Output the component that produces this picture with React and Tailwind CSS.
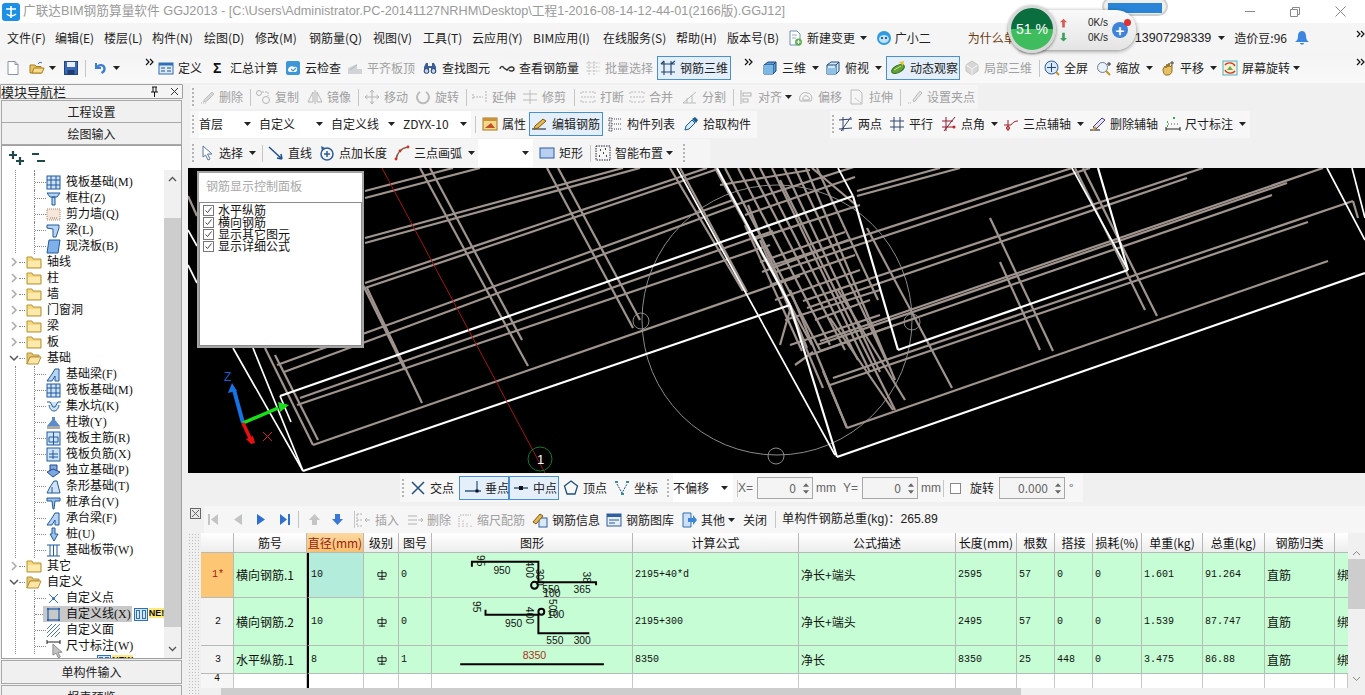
import React from "react";

const Ic = ({ c = "", children, o }) => (
  <svg viewBox="0 0 16 16" fill="none" className={`w-4 h-4 shrink-0 ${o ? "opacity-40" : ""} ${c}`}>{children}</svg>
);
const Caret = ({ c = "ml-[6px]" }) => (
  <svg viewBox="0 0 7 4" className={`w-[7px] h-[4px] shrink-0 ${c}`}><path d="M0 0H7L3.5 4Z" fill="#222" /></svg>
);
const More = ({ c = "" }) => (
  <svg viewBox="0 0 9 8" className={`w-[9px] h-[8px] shrink-0 ${c}`} fill="none" stroke="#111" strokeWidth="1.2"><path d="M1 1l3 3-3 3M5 1l3 3-3 3" /></svg>
);
const Grip = ({ c = "w-[9px] pl-[2px]" }) => (
  <div className={`shrink-0 flex flex-col justify-center gap-[2px] ${c}`}>
    {[0, 1, 2, 3, 4].map((i) => <span key={i} className="block w-[2px] h-[2px] bg-[#b5b5b5]" />)}
  </div>
);
const Sep = ({ c = "w-[6px]" }) => <div className={`shrink-0 h-full flex items-center ${c}`}><span className="block w-px h-[17px] bg-[#c6c6c6]" /></div>;

const Tool = ({ w, i, t, g, a, tight, box, pl = "" }) => (
  <div className={`flex items-center shrink-0 whitespace-nowrap ${w} ${g ? "text-[#a0a0a0]" : ""} ${box ? "h-[24px] bg-[#e4effb] border border-[#4a90d0] " + pl : "h-full"}`}>
    {i}
    <span className="ml-1">{t}</span>
    {a && <Caret c={tight ? "ml-[3px]" : "ml-[6px]"} />}
  </div>
);

const blue = "#2f6fb5";
const I = {
  doc: <Ic><path d="M3 1.5h7l3 3v10H3z" fill="#fff" stroke="#8a94a0" /><path d="M10 1.5v3h3" stroke="#8a94a0" /></Ic>,
  open: <Ic><path d="M1 5h5l1 1.5h5V13H1z" fill="#e9c45f" stroke="#a77f22" /><path d="M3 13l2-5h10l-2 5z" fill="#f6dc8c" stroke="#a77f22" /><path d="M9 4c1-2 3-2 4-1" stroke="#3b78b8" /></Ic>,
  save: <Ic><rect x="1.5" y="1.5" width="13" height="13" fill="#3a68b8" stroke="#24467f" /><rect x="4" y="2" width="8" height="5" fill="#e8eef8" /><rect x="4.5" y="10" width="7" height="4.5" fill="#1f3c6c" /></Ic>,
  undo: <Ic><path d="M4 3v5h5" stroke="#3e7fd0" strokeWidth="2" /><path d="M4.5 8c2-4 8-4 8 1 0 2-1 3-3 4" stroke="#3e7fd0" strokeWidth="2.4" /></Ic>,
  def: <Ic><rect x="1" y="3" width="14" height="11" fill="#dbe8f8" stroke={blue} /><rect x="1" y="3" width="14" height="2.5" fill={blue} /><path d="M3 8h4M3 11h4M9 8h4M9 11h4" stroke="#28507f" /></Ic>,
  sigma: <Ic><text x="3" y="13" fontSize="14" fontWeight="700" fill="#111" fontFamily="Liberation Sans">Σ</text></Ic>,
  cloud: <Ic><rect x="1" y="1" width="14" height="14" rx="2" fill="#3c96d8" /><path d="M3 10c0-3 4-5 6-3 2-1 4 1 3 3 0 2-2 2-3 2H5c-1 0-2-1-2-2z" fill="#fff" /><path d="M6 9l2 2 3-3" stroke="#3c96d8" strokeWidth="1.2" /></Ic>,
  level: <Ic o><path d="M1 14V8l9-4v10zM10 9h5v5h-5z" fill="#9aa0a6" /><path d="M3 10l7-5" stroke="#555" /></Ic>,
  binoc: <Ic><path d="M2 7l2-4h2v3h4V3h2l2 4v6H9V8H7v5H2z" fill="#3b5f9a" /><circle cx="4.5" cy="11" r="2.4" fill="#c5d6ee" stroke="#24406e" /><circle cx="11.5" cy="11" r="2.4" fill="#c5d6ee" stroke="#24406e" /></Ic>,
  view: <Ic><path d="M1 9c0-3 3-3 4-1l3 2 2-2c2-2 5-1 5 1s-3 3-5 1" stroke="#333" strokeWidth="1.5" /></Ic>,
  batch: <Ic o><path d="M1.5 3h13M1.5 7h13M1.5 11h13M4 1v14M9 1v14" stroke="#777" strokeDasharray="2 1" /></Ic>,
  rebar3d: <Ic><path d="M1 4h14M1 12h14M4 1v14M11 1v14M1 4l3-3M11 4l4-3" stroke="#20406e" strokeWidth="1.1" /></Ic>,
  cube: <Ic><path d="M2 5l4-3h8v9l-3 3H2z" fill="#5a9ad0" stroke="#1e4d80" /><path d="M2 5h9v9M11 5l3-3" stroke="#1e4d80" /><path d="M2 5h9v9H2z" fill="#7bb8e6" /></Ic>,
  cubeO: <Ic><path d="M2 5l4-3h8v9l-3 3H2z" fill="#d6e8f6" stroke="#1e4d80" /><path d="M2 5h9v9M11 5l3-3" stroke="#1e4d80" /><path d="M2 8h9v6H2z" fill="#8fc0e6" /></Ic>,
  orbit: <Ic><ellipse cx="8" cy="9" rx="7" ry="3.5" transform="rotate(-28 8 9)" fill="#5fa33a" stroke="#2f6a18" /><path d="M9 2l5-1-1 5z" fill="#e6c52e" /><path d="M4 10l7-4" stroke="#cfe76e" /></Ic>,
  local: <Ic o><path d="M8 1l6 4v6l-6 4-6-4V5z" fill="#aaa" stroke="#777" /><path d="M2 5l6 4 6-4M8 9v6" stroke="#eee" /></Ic>,
  full: <Ic><circle cx="7.5" cy="7.5" r="6.5" fill="#dbe8f8" stroke="#2c5c9c" /><path d="M7.5 3v9M3 7.5h9" stroke="#1f4c8c" /><path d="M12 12l3 3" stroke="#c0962a" strokeWidth="2" /></Ic>,
  zoom: <Ic><circle cx="6.5" cy="7.5" r="5" fill="#eaf2fb" stroke="#6e7f92" /><path d="M10 11l4 4" stroke="#c0962a" strokeWidth="2" /><path d="M13 2v4M11 4h4" stroke="#333" /></Ic>,
  hand: <Ic><path d="M3 9l2-3 1 2 1-4 1 3 1-4 1 4 2-2v6c0 2-2 4-4 4H6c-2 0-3-3-3-6z" fill="#e6c065" stroke="#8f6a1c" /><path d="M12 1v4M10 3h4" stroke="#444" /></Ic>,
  rot: <Ic><rect x="1" y="1" width="14" height="14" fill="#f8f0d4" stroke="#49b6c8" /><path d="M3 5c2-3 8-3 10 1" stroke="#d03a30" strokeWidth="1.4" /><path d="M13 11c-2 3-8 3-10-1" stroke="#d03a30" strokeWidth="1.4" /><path d="M5 10l3-4 3 4z" fill="#6eaa4a" /></Ic>,
  newc: <Ic><path d="M3 1h7l3 3v11H3z" fill="#fff" stroke="#6e8fb0" /><path d="M5 5h5M5 8h4" stroke="#9ab" /><circle cx="11.5" cy="12" r="3.5" fill="#5ab04c" /><path d="M11.5 10v4M9.5 12h4" stroke="#fff" /></Ic>,
  bot: <Ic><circle cx="8" cy="8" r="7" fill="#2f9ae0" /><ellipse cx="8" cy="9" rx="5" ry="4" fill="#bde4fa" /><circle cx="6" cy="8" r="1" fill="#136" /><circle cx="10" cy="8" r="1" fill="#136" /></Ic>,
  bell: <Ic><path d="M8 1c3 0 4 3 4 5 0 3 1 5 3 6H1c2-1 3-3 3-6 0-2 1-5 4-5z" fill="#3d86e0" /><path d="M6 13c0 2 4 2 4 0" fill="#3d86e0" /></Ic>,
  del: <Ic o><path d="M2 14h6" stroke="#555" strokeDasharray="1 1" /><path d="M6 10l7-7 2 2-7 7-4 1z" fill="#aaa" stroke="#777" /></Ic>,
  copy: <Ic o><circle cx="4" cy="4" r="2.5" stroke="#555" /><circle cx="11" cy="11" r="3.5" stroke="#555" /><path d="M7 3h6v4" stroke="#555" strokeDasharray="2 1" /></Ic>,
  mirror: <Ic o><path d="M8 1v14" stroke="#555" /><path d="M6 3v10H1zM10 3v10h5z" stroke="#555" /></Ic>,
  move: <Ic o><path d="M8 1v14M1 8h14M8 1L6 3.5M8 1l2 2.5M8 15l-2-2.5M8 15l2-2.5M1 8l2.5-2M1 8l2.5 2M15 8l-2.5-2M15 8l-2.5 2" stroke="#555" /></Ic>,
  rotate: <Ic o><path d="M5 3a6 6 0 1 0 6 0" stroke="#666" strokeWidth="2" /></Ic>,
  extend: <Ic o><path d="M1 8h10M14 2v12M1 5v6" stroke="#555" strokeDasharray="2 1" /></Ic>,
  trim: <Ic o><path d="M1 5h14M1 11h14M8 1v14" stroke="#666" /></Ic>,
  brk: <Ic o><path d="M1 5v-2h6M9 3h6v2M1 11v2h6M9 13h6v-2M1 8h14" stroke="#666" strokeDasharray="2 1" /></Ic>,
  split: <Ic o><path d="M1 14L14 3M1 14h13M5 14V9M10 14V6" stroke="#666" /></Ic>,
  align: <Ic o><path d="M3 1v14" stroke="#555" /><rect x="5" y="4" width="8" height="3" stroke="#555" /><rect x="5" y="10" width="5" height="3" stroke="#555" /></Ic>,
  offset: <Ic o><path d="M2 12c-2-6 4-10 7-8 4 0 6 4 4 8z" stroke="#555" /><path d="M5 11c-1-3 2-5 4-4s3 2 2 4z" stroke="#555" /></Ic>,
  stretch: <Ic o><path d="M2 1h8l3 3v11H2z" stroke="#666" /><path d="M6 9l6 5" stroke="#666" strokeDasharray="2 1" /></Ic>,
  grab: <Ic o><path d="M1 14h4" stroke="#555" strokeDasharray="1 1" /><path d="M6 11l7-9 2 2-8 9z" stroke="#666" fill="#ccc" /></Ic>,
  prop: <Ic><rect x="1" y="2" width="14" height="12" fill="#f3d98a" stroke="#a8781f" /><rect x="1" y="2" width="14" height="3" fill="#c9923a" /><path d="M3 12l6-5 4 5z" fill="#c74e2c" /></Ic>,
  edit: <Ic><path d="M0 13h14" stroke="#111" /><path d="M3 10l8-7 3 2-8 7-4 1z" fill="#e8b84c" stroke="#7a5a12" /></Ic>,
  list: <Ic><path d="M2 2h3v3H2zM2 7h3v3H2zM2 12h3v3H2z" stroke="#445" strokeDasharray="1 .5" /><path d="M7 3h7M7 8h7M7 13h7" stroke="#445" strokeDasharray="1 1" /></Ic>,
  pick: <Ic><path d="M2 14l1-4 6-6 3 3-6 6z" fill="#d5ecf8" stroke="#1a5a96" /><path d="M9 3l3-2 3 3-2 3z" fill="#1a5a96" /></Ic>,
  two: <Ic><path d="M1 4l13-1M1 13l13-1M5 1v14M13 1L3 15" stroke="#34466a" /></Ic>,
  para: <Ic><path d="M1 5h14M1 11h14M5 1v14M11 1v14" stroke="#34466a" /></Ic>,
  angle: <Ic><path d="M1 5h11M1 11h11M5 1v14M3 15L14 1" stroke="#8c1c30" /><circle cx="13" cy="11" r="1.5" fill="#d02020" /></Ic>,
  three: <Ic><path d="M5 15V4M1 9h7c2-3 4-4 7-4" stroke="#9c1c28" /><circle cx="5" cy="12" r="1.6" stroke="#c02020" /></Ic>,
  delaux: <Ic><path d="M0 14h10" stroke="#111" /><path d="M3 11l9-9 3 2-9 9z" fill="#e8e4f2" stroke="#433a7c" /><path d="M3 14l3-3" stroke="#c9a04a" strokeWidth="2" /></Ic>,
  dim: <Ic><path d="M1 11v4M15 11v4M1 13h14" stroke="#222" /><path d="M2 6h1M8 2h2M2 10h1" stroke="#3aa84a" strokeWidth="2" /><path d="M3 8h10" stroke="#555" strokeDasharray="1 2" /></Ic>,
  sel: <Ic><path d="M4 1l9 8H8.500l2.500 5-2 1-2.500-5L4 12z" fill="#fff" stroke="#5878a0" /></Ic>,
  lineT: <Ic><path d="M1 2l13 12M14 14l-1-5M14 14l-5-1" stroke="#1f4f8f" strokeWidth="1.5" /></Ic>,
  addL: <Ic><circle cx="8" cy="9" r="6" stroke="#2e5c9a" strokeWidth="1.5" /><path d="M8 6v6M5 9h6" stroke="#2e5c9a" strokeWidth="1.5" /><path d="M2 1l4 2-3 3z" fill="#2e5c9a" /></Ic>,
  arc: <Ic><path d="M2 15C3 8 7 3 14 2" stroke="#7d5a48" strokeWidth="1.5" /><circle cx="2" cy="14" r="1.4" fill="#d03020" /><circle cx="6" cy="6" r="1.4" fill="#d03020" /><circle cx="14" cy="2" r="1.4" fill="#d03020" /></Ic>,
  rect: <Ic><rect x="1" y="3" width="14" height="10" fill="#b8cff0" stroke="#2f5da0" /></Ic>,
  smart: <Ic><rect x="1" y="1" width="14" height="14" stroke="#223" strokeDasharray="1.5 1" /><path d="M5 5h1M10 4h1M8 8h1M4 11h1M11 11h1" stroke="#111" strokeWidth="1.6" /></Ic>,
  cross: <Ic><path d="M2 2l12 12M14 2L2 14" stroke="#23507f" strokeWidth="1.5" /></Ic>,
  perp: <Ic><path d="M0 11h16" stroke="#23507f" strokeWidth="1.4" /><path d="M12 1v10" stroke="#23507f" strokeWidth="1.2" /><rect x="10.5" y="9.5" width="3" height="3" fill="#111" /></Ic>,
  mid: <Ic><path d="M1 8h14" stroke="#23507f" strokeWidth="1.4" /><rect x="6" y="6" width="4" height="4" fill="#111" /></Ic>,
  top: <Ic><path d="M8 1l6.5 5-2.5 8H4L1.500 6z" stroke="#23507f" strokeWidth="1.3" /></Ic>,
  coord: <Ic><path d="M3 4l5 9 5-9" stroke="#23507f" strokeDasharray="2 1" /><path d="M1 2h3M12 2h3M7 14h3" stroke="#3a8c9c" strokeWidth="2" /></Ic>,
  ins: <Ic o><path d="M2 2h6M2 8h6M2 14h6M2 2v12" stroke="#555" strokeDasharray="2 1" /><path d="M15 8h-5M12 6l-2 2 2 2" stroke="#555" /></Ic>,
  dela: <Ic o><path d="M1 4h9M1 8h9M1 12h9" stroke="#555" /><path d="M11 8h5M14 6l2 2-2 2" stroke="#555" /></Ic>,
  scale: <Ic o><path d="M2 15V4M6 15V8M10 15v-4M14 15v-2M3 3h11" stroke="#555" strokeDasharray="1.500 1" /></Ic>,
  info: <Ic><rect x="7" y="6" width="8" height="9" fill="#dbe8f8" stroke="#2f5da0" /><path d="M1 10l7-8 3 2-7 8z" fill="#e6b950" stroke="#7a5a12" /></Ic>,
  lib: <Ic><rect x="1" y="2" width="14" height="12" fill="#e6eefa" stroke="#2f5da0" /><rect x="1" y="2" width="14" height="3" fill="#2f5da0" /><path d="M3 8h10M3 11h6" stroke="#2f5da0" /></Ic>,
  oth: <Ic><path d="M2 1h8v14H2z" fill="#cfe0f6" stroke="#2f6fb5" /><path d="M7 6h5V3l4 5-4 5v-3H7z" fill="#3b86d8" /></Ic>,
};

const Menu = [
  ["文件(F)", "w-[48px]"], ["编辑(E)", "w-[49px]"], ["楼层(L)", "w-[48px]"], ["构件(N)", "w-[52px]"], ["绘图(D)", "w-[51px]"],
  ["修改(M)", "w-[54px]"], ["钢筋量(Q)", "w-[64px]"], ["视图(V)", "w-[50px]"], ["工具(T)", "w-[49px]"], ["云应用(Y)", "w-[61px]"],
  ["BIM应用(I)", "w-[70px]"], ["在线服务(S)", "w-[73px]"], ["帮助(H)", "w-[51px]"], ["版本号(B)", "w-[53px]"],
];

const lines = {
  grey: [
    [313, 445, 800, 276], [300, 398, 773, 231], [297, 405, 770, 245], [277, 365, 733, 200], [284, 372, 737, 205],
    [365, 283, 707, 168], [365, 288, 715, 170], [365, 238, 623, 168], [365, 243, 640, 168], [365, 191, 453, 168], [365, 198, 480, 168],
    [188, 196, 197, 216], [420, 168, 528, 366], [430, 168, 522, 340], [367, 288, 422, 403], [363, 285, 405, 370],
    [547, 168, 633, 328], [558, 168, 640, 320], [670, 168, 743, 291], [680, 168, 747, 292],
    [313, 445, 265, 348], [318, 440, 275, 355],
    [847, 428, 1328, 261], [847, 428, 823, 371], [830, 385, 1308, 222], [833, 378, 1353, 201], [1353, 201, 1358, 218],
    [817, 345, 1287, 183], [820, 351, 1272, 195], [820, 341, 1323, 168], [803, 301, 1203, 168], [807, 308, 1187, 178],
    [773, 265, 1072, 168], [776, 272, 1090, 168], [857, 191, 940, 168], [857, 196, 960, 168],
    [830, 318, 893, 410], [952, 388, 867, 228], [1053, 351, 990, 218], [1157, 316, 1083, 168], [1040, 350, 1000, 262], [1145, 310, 1075, 168],
    [895, 410, 780, 180], [905, 400, 838, 290], [856, 205, 812, 168],
    [802, 351, 745, 225], [807, 348, 748, 205], [823, 388, 760, 240], [847, 428, 790, 290], [715, 168, 812, 345], [725, 168, 820, 350], [738, 168, 830, 345],
    [750, 168, 845, 350], [760, 168, 858, 360], [772, 168, 870, 372], [784, 168, 880, 372], [795, 168, 886, 360], [806, 168, 895, 380], [817, 168, 878, 300],
    [720, 185, 810, 170], [735, 205, 860, 165], [745, 215, 855, 177], [752, 240, 860, 205], [760, 262, 845, 232], [770, 285, 855, 255], [775, 300, 860, 270], [785, 320, 880, 290], [790, 345, 880, 315], [810, 355, 895, 325], [815, 320, 870, 300], [762, 272, 848, 240],
    [780, 345, 790, 310], [795, 365, 813, 352],
  ],
  whiteThick: [[303, 471, 790, 305], [790, 305, 837, 457], [837, 457, 1365, 273], [280, 396, 853, 196], [853, 196, 898, 350], [898, 350, 1128, 270], [1128, 270, 1098, 168], [717, 168, 790, 305]],
  whiteThin: [[677, 168, 835, 455], [838, 168, 853, 196], [1072, 168, 1128, 270], [1327, 168, 1365, 240], [1352, 168, 1365, 218], [233, 348, 303, 471], [253, 348, 303, 471], [188, 230, 197, 246], [188, 265, 197, 283], [280, 396, 291, 422]],
};

function Scene() {
  return (
    <svg viewBox="188 168 1177 305" className="w-[1177px] h-[305px] block bg-black" fill="none">
      <circle cx="777" cy="320" r="135" stroke="#8a8a8a" />
      <circle cx="641" cy="321" r="8" stroke="#8a8a8a" /><circle cx="776" cy="456" r="8" stroke="#8a8a8a" /><circle cx="912" cy="322" r="8" stroke="#8a8a8a" />
      {lines.grey.map((l, i) => <line key={i} x1={l[0]} y1={l[1]} x2={l[2]} y2={l[3]} stroke="#a0948f" strokeWidth="2.2" />)}
      {lines.whiteThin.map((l, i) => <line key={i} x1={l[0]} y1={l[1]} x2={l[2]} y2={l[3]} stroke="#fff" strokeWidth="1.7" />)}
      {lines.whiteThick.map((l, i) => <line key={i} x1={l[0]} y1={l[1]} x2={l[2]} y2={l[3]} stroke="#fff" strokeWidth="2.2" />)}
      <line x1="382" y1="168" x2="545" y2="473" stroke="#a81414" strokeWidth="1" />
      <circle cx="540" cy="459" r="12" stroke="#0e7a2c" />
      <text x="537" y="464" fontSize="13" fill="#fff" fontFamily="Liberation Sans">1</text>
      <path d="M243 423L234 390" stroke="#1673e6" strokeWidth="4" /><path d="M232 383l-4 10 9-2z" fill="#1673e6" />
      <path d="M243 423L278 408" stroke="#18e018" strokeWidth="3.500" /><path d="M289 405l-11-3 2 10z" fill="#18e018" />
      <path d="M243 423L250 438" stroke="#e81010" strokeWidth="3.500" /><path d="M251 444l-5-5 7-3 2 7z" fill="#e81010" />
      <text x="224" y="381" fontSize="12" fill="#1a5fd0" fontFamily="Liberation Sans">Z</text>
      <path d="M263 432l9 9M272 432l-9 9" stroke="#d02020" />
    </svg>
  );
}

const Row = ({ t, arrow }) => (
  <div className="flex items-center h-[16px] whitespace-nowrap">
    <span className="w-[10px] ml-[7px] flex justify-center shrink-0">
      <svg viewBox="0 0 10 10" className="w-[10px] h-[10px]" fill="none" stroke={arrow === "open" ? "#555" : "#aaa"} strokeWidth="1.5">
        {arrow === "open" ? <path d="M1 3l4 4 4-4" /> : <path d="M3 1l4 4-4 4" />}
      </svg>
    </span>
    <span className="w-[6px] border-t border-dotted border-[#888] shrink-0" />
    <svg viewBox="0 0 16 14" className="w-[16px] h-[14px] shrink-0 ml-px">
      {arrow === "open"
        ? <><path d="M1 2h5l1 2h6v2H4l-3 7z" fill="#e8c770" stroke="#b8923c" /><path d="M4 6h11l-3 7H1z" fill="#fbe6a6" stroke="#b8923c" /></>
        : <><path d="M1 2h5l1 2h8v9H1z" fill="#f6d87a" stroke="#b8923c" /><path d="M2 6h12v6H2z" fill="#fbe9ae" /></>}
    </svg>
    <span className="ml-[5px]">{t}</span>
  </div>
);

const leaf = {
  raft: <><rect x="1" y="1" width="13" height="13" fill="#cfe2f8" stroke="#1f5a9c" /><path d="M1 5h13M1 10h13M5 1v13M10 1v13" stroke="#1f5a9c" /></>,
  col: <><path d="M1 2h13l-3 4H4zM6 6h3v8H6z" fill="#b8d4f2" stroke="#1f5a9c" /></>,
  wall: <><rect x="1" y="2" width="13" height="11" fill="#f6e7da" stroke="#b08060" strokeDasharray="1 1" /><path d="M4 11h7" stroke="#777" strokeDasharray="1 1" /></>,
  beam: <><path d="M1 2h12v3l-3 9H7V6L1 5z" fill="#b8d4f2" stroke="#1f5a9c" /></>,
  slab: <><path d="M3 1h11l-2 13H1z" fill="#7fb0ea" stroke="#1f5a9c" /></>,
  fbeam: <><path d="M1 14l5-7 3-5h4v12H9V9l-3 5z" fill="#b8d4f2" stroke="#1f5a9c" /></>,
  pit: <><path d="M1 3h3l3 5h2l3-5h3M3 6c1 8 9 8 10 0" stroke="#1f5a9c" fill="#cfe2f8" /></>,
  cap: <><path d="M6 2h3v3l5 6H1l5-6z" fill="#5a8ccc" /><rect x="1" y="11" width="13" height="3" fill="#aaa" /></>,
  main: <><rect x="1" y="1" width="13" height="13" fill="#cfe2f8" stroke="#1f5a9c" /><path d="M3 6h9v5H3zM7.500 1v13" stroke="#1f5a9c" fill="none" /></>,
  neg: <><rect x="1" y="1" width="13" height="13" fill="#cfe2f8" stroke="#1f5a9c" /><path d="M3 7h9M3 10h9M7 3v9" stroke="#1f5a9c" /></>,
  ind: <><path d="M1 9l6-3 7 3-7 5zM4 8V2h7v6" fill="#7fa8e0" stroke="#1f4a8c" /></>,
  strip: <><path d="M1 14l3-6 4-6h3l3 12zM6 14V8" fill="#cfe2f8" stroke="#1f5a9c" /></>,
  pcap: <><path d="M1 3h13v3H9l-1 8H7L6 6H1z" fill="#9cc0ea" stroke="#1f5a9c" /></>,
  pile: <><path d="M6 1h3v6h3l-4 7-4-7h2z" fill="#9cc0ea" stroke="#1f5a9c" /></>,
  band: <><path d="M1 2h13M1 13h13M4 2v11M7.500 2v11M11 2v11" stroke="#1f5a9c" /></>,
  pt: <><path d="M3 3l9 9M12 3l-9 9" stroke="#3a72b8" /><circle cx="7.500" cy="7.500" r="1.500" fill="#3a72b8" /></>,
  line: <><rect x="2" y="2" width="11" height="11" stroke="#2a66ac" strokeWidth="1.300" fill="none" /><path d="M1 1h2v2H1zM12 1h2v2h-2zM1 12h2v2H1zM12 12h2v2h-2z" fill="#2a66ac" /></>,
  face: <><path d="M1 6l5-5M1 10l9-9M1 14L14 1M5 14l9-9M9 14l5-5" stroke="#4a78b0" /></>,
  dim: <><path d="M1 1v4M14 1v4M1 3h13" stroke="#222" /></>,
};
const BoxIcon = () => (
  <span className="ml-[2px] w-[14px] h-[13px] border border-[#2f6fb5] bg-[#d5e6f8] shrink-0 flex justify-center gap-[2px] pt-[1px]">
    <span className="w-[4px] h-[9px] border border-[#2f6fb5]" /><span className="w-[4px] h-[9px] border border-[#2f6fb5]" />
  </span>
);
const Leaf = ({ k, t, hl, children }) => (
  <div className="flex items-center h-[16px] whitespace-nowrap ml-[32px] border-l border-dotted border-[#888]">
    <span className={`border-t border-dotted border-[#888] shrink-0 ${hl ? "w-[8px]" : "w-[11px]"}`} />
    <span className={`flex items-center h-full shrink-0 ${hl ? "bg-[#c8c8c8] pl-[3px] pr-[1px]" : ""}`}>
      <svg viewBox="0 0 15 15" className="w-[15px] h-[15px] shrink-0" fill="none">{leaf[k]}</svg>
      <span className="ml-[5px]">{t}</span>
    </span>
    {children}
  </div>
);

const Spin = ({ v, w }) => (
  <div className={`flex items-center justify-end h-[22px] border border-[#a8a8a8] bg-[#f4f4f4] text-[#666] shrink-0 ${w}`}>
    <span>{v}</span>
    <span className="w-[13px] ml-[3px] flex flex-col items-center gap-[3px]">
      <svg viewBox="0 0 7 4" className="w-[6px] h-[4px]"><path d="M0 4h7L3.500 0z" fill="#666" /></svg>
      <svg viewBox="0 0 7 4" className="w-[6px] h-[4px]"><path d="M0 0h7L3.500 4z" fill="#666" /></svg>
    </span>
  </div>
);

const cols = "grid grid-cols-[33px_73px_57px_35px_33px_201px_166px_157px_61px_38px_38px_49px_61px_62px_70px_13px]";
const head = ["", "筋号", "直径(mm)", "级别", "图号", "图形", "计算公式", "公式描述", "长度(mm)", "根数", "搭接", "损耗(%)", "单重(kg)", "总重(kg)", "钢筋归类"];
const Num = ({ children }) => <span className="font-['Liberation_Mono',monospace] text-[10px]">{children}</span>;
const cell = "border-r border-b border-[#b4bcb6] flex items-center pl-[2px] overflow-hidden whitespace-nowrap";
const T2 = (p) => <text fontFamily="Liberation Sans" fontSize="10.500" fill="#111" {...p} />;

const Shape1 = () => (
  <svg viewBox="0 0 201 45" className="w-full h-full" fill="none">
    <path d="M38 14V9H106V30H165V33" stroke="#000" strokeWidth="2" /><circle cx="102" cy="33" r="3.500" stroke="#000" strokeWidth="2" />
    <T2 x="60" y="21">950</T2><T2 x="110" y="41">550</T2><T2 x="142" y="41">365</T2><T2 x="111" y="44.500">100</T2>
    <T2 transform="translate(43,2) rotate(90)">95</T2><T2 transform="translate(93,8) rotate(90)">400</T2><T2 transform="translate(104,16) rotate(90)">300</T2><T2 transform="translate(152,19) rotate(90)">38</T2>
  </svg>
);
const Shape2 = () => (
  <svg viewBox="0 0 201 48" className="w-full h-full" fill="none">
    <path d="M52 12V17H106V36H158" stroke="#000" strokeWidth="2" /><circle cx="109" cy="14" r="3" stroke="#000" strokeWidth="2" />
    <T2 x="72" y="30">950</T2><T2 x="115" y="20">100</T2><T2 x="114" y="47">550</T2><T2 x="142" y="47">300</T2>
    <T2 transform="translate(39,3) rotate(90)">95</T2><T2 transform="translate(93,9) rotate(90)">400</T2><T2 transform="translate(117,1) rotate(90)">500</T2>
  </svg>
);
const Shape3 = () => (
  <svg viewBox="0 0 201 28" className="w-full h-full" fill="none">
    <path d="M25 19H174" stroke="#000" strokeWidth="2" />
    <text x="102" y="13" textAnchor="middle" fontSize="11" fill="#b03020" fontFamily="Liberation Sans">8350</text>
  </svg>
);

const rows = [
  { h: "h-[45px]", n: "1*", name: "横向钢筋.1", d: "10", lv: "0", S: Shape1, f: "2195+40*d", desc: "净长+端头", len: "2595", c: "57", l: "0", s: "0", u: "1.601", tot: "91.264" },
  { h: "h-[48px]", n: "2", name: "横向钢筋.2", d: "10", lv: "0", S: Shape2, f: "2195+300", desc: "净长+端头", len: "2495", c: "57", l: "0", s: "0", u: "1.539", tot: "87.747" },
  { h: "h-[28px]", n: "3", name: "水平纵筋.1", d: "8", lv: "1", S: Shape3, f: "8350", desc: "净长", len: "8350", c: "25", l: "448", s: "0", u: "3.475", tot: "86.88" },
];

function Table() {
  return (
    <div className="flex-1 relative overflow-hidden bg-white text-[12px] text-[#111]">
      <div className={`${cols} h-[20px] bg-gradient-to-b from-white to-[#ececec]`}>
        {head.map((h, i) => (
          <div key={i} className={`border-r border-b border-[#b8b8b8] flex items-center justify-center whitespace-nowrap ${i === 2 ? "bg-gradient-to-b from-[#fbd9a0] to-[#f6c070] text-[#9c1c10]" : ""}`}>{h}</div>
        ))}
        <div className="border-b border-[#b8b8b8]" />
      </div>
      {rows.map((r, i) => (
        <div key={i} className={`${cols} ${r.h} bg-[#c6fdd4]`}>
          <div className={`${cell} justify-center ${i === 0 ? "bg-[#fcc674] text-[#9c1c10]" : "bg-[#f3f3f3]"}`}><Num>{r.n}</Num></div>
          <div className={cell}>{r.name}</div>
          <div className={`${cell} border-l-2 border-l-black ${i === 0 ? "bg-[#b4ecdc]" : ""}`}><Num>{r.d}</Num></div>
          <div className={`${cell} justify-center pl-0`}><svg viewBox="0 0 11 11" className="w-[10px] h-[10px]" fill="none" stroke="#111"><path d="M1 3h9v4H1zM5.500 0v11M2 10h7" /></svg></div>
          <div className={cell}><Num>{r.lv}</Num></div>
          <div className={`${cell} pl-0`}><r.S /></div>
          <div className={cell}><Num>{r.f}</Num></div>
          <div className={cell}>{r.desc}</div>
          <div className={cell}><Num>{r.len}</Num></div>
          <div className={cell}><Num>{r.c}</Num></div>
          <div className={cell}><Num>{r.l}</Num></div>
          <div className={cell}><Num>{r.s}</Num></div>
          <div className={cell}><Num>{r.u}</Num></div>
          <div className={cell}><Num>{r.tot}</Num></div>
          <div className={cell}>直筋</div>
          <div className="overflow-hidden pl-[2px] flex items-center border-b border-[#b4bcb6]">绑</div>
        </div>
      ))}
      <div className={`${cols} h-[14px]`}>
        <div className="border-r border-[#c8c8c8] bg-[#f6f6f6] flex justify-center"><Num>4</Num></div>
        <div className="border-r border-[#c8c8c8]" />
        <div className="border-r border-[#c8c8c8] border-l-2 border-l-black" />
        {[0, 1, 2, 3, 4, 5, 6, 7, 8, 9, 10, 11, 12].map((i) => <div key={i} className="border-r border-[#c8c8c8]" />)}
      </div>
      <div className="absolute left-0 right-0 bottom-0 h-[7px] bg-[#f0f0f0] flex">
        <div className="w-[20px]" /><div className="w-[800px] bg-[#cdcdcd]" />
      </div>
      <div className="absolute right-0 top-0 bottom-0 w-[17px] bg-[#f0f0f0] flex flex-col items-center">
        <svg viewBox="0 0 9 6" className="w-[9px] h-[6px] mt-[17px]" fill="none" stroke="#888"><path d="M1 5l3.500-3.500L8 5" /></svg>
        <div className="w-full h-[50px] mt-[3px] bg-[#cdcdcd]" />
        <div className="flex-1" />
        <svg viewBox="0 0 9 6" className="w-[9px] h-[6px] mb-[13px]" fill="none" stroke="#888"><path d="M1 1l3.500 3.500L8 1" /></svg>
      </div>
    </div>
  );
}

function Widget() {
  return (
    <>
      <div className="absolute left-[1102px] -top-[3px] w-[66px] h-[19px] rounded-full bg-[#eee] border-2 border-[#d0d0d0] flex items-center justify-center">
        <div className="w-[54px] h-[10px] mt-[3px] bg-[#2a85d8]" />
      </div>
      <div className="absolute left-[1020px] top-[10px] w-[116px] h-[40px] rounded-r-[20px] bg-gradient-to-b from-[#fafafa] to-[#e4e4e4] shadow-[0_1px_4px_rgba(0,0,0,0.45)] flex items-center text-[10px] text-[#222]">
        <div className="w-[38px]" />
        <div className="flex flex-col items-center w-[10px] gap-[4px]">
          <svg viewBox="0 0 8 10" className="w-[7px] h-[10px]"><path d="M4 0l4 4H5.500v6h-3V4H0z" fill="#d85a50" /></svg>
          <svg viewBox="0 0 8 10" className="w-[7px] h-[10px]"><path d="M4 10l4-4H5.500V0h-3v6H0z" fill="#3aa060" /></svg>
        </div>
        <div className="ml-[20px] flex flex-col gap-[3px] leading-[12px] font-['Liberation_Sans',sans-serif]"><span>0K/s</span><span>0K/s</span></div>
        <div className="relative ml-[4px] w-[16px] h-[16px] rounded-full bg-[#3f83d8] flex items-center justify-center text-white text-[15px] font-bold leading-none">+
          <span className="absolute -top-[3px] -right-[3px] w-[7px] h-[7px] rounded-full bg-[#e03030]" />
        </div>
      </div>
      <div className="absolute left-[1008px] top-[5px] w-[48px] h-[48px] rounded-full border-[3px] border-[#d8d8d8] overflow-hidden shadow-[0_1px_3px_rgba(0,0,0,0.5)] bg-gradient-to-b from-[#0b6e3e] from-50% to-[#3fbd5e] to-50% flex items-center justify-center text-white text-[14px] font-['Liberation_Sans',sans-serif]">51 %</div>
    </>
  );
}

export default function App() {
  return (
    <div className="relative w-[1365px] h-[695px] overflow-hidden bg-[#f0f0f0] text-[12px] text-[#222] leading-none font-['Noto_Sans_CJK_SC','Noto_Sans',sans-serif]">
      {/* Title */}
      <div className="h-[23px] bg-white flex items-center text-[#9a9a9a] whitespace-nowrap">
        <svg viewBox="0 0 18 18" className="w-[18px] h-[18px] ml-[2px] mt-[1px] shrink-0">
          <rect width="18" height="18" rx="3" fill="#1c8fe6" />
          <path d="M4 6h10M9 3v12M5 11c1 2 6 3 9 0" stroke="#fff" strokeWidth="1.600" fill="none" />
        </svg>
        <span className="ml-[3px] font-['Liberation_Sans','Noto_Sans_CJK_SC',sans-serif] text-[12.7px]">广联达BIM钢筋算量软件 GGJ2013 - [C:\Users\Administrator.PC-20141127NRHM\Desktop\工程1-2016-08-14-12-44-01(2166版).GGJ12]</span>
        <div className="ml-auto flex items-center">
          <span className="block w-[10px] h-px bg-[#888] mr-[35px]" />
          <svg viewBox="0 0 10 10" className="w-[10px] h-[10px] mr-[35px]" fill="none" stroke="#888"><path d="M.5 2.500h7v7h-7zM2.500 2.500v-2h7v7h-2" /></svg>
          <svg viewBox="0 0 11 11" className="w-[11px] h-[11px] mr-[19px]" fill="none" stroke="#888"><path d="M.5.500l10 10M10.500.500l-10 10" /></svg>
        </div>
      </div>
      {/* Menu */}
      <div className="h-[30px] bg-[#f5f5f5] flex items-center pl-[7px] whitespace-nowrap">
        {Menu.map(([t, w]) => <div key={t} className={`shrink-0 ${w}`}>{t}</div>)}
        <div className="w-[7px] shrink-0" />
        {I.newc}
        <span className="ml-[4px]">新建变更</span><Caret c="ml-[5px]" />
        <span className="w-[14px]" />
        {I.bot}
        <span className="ml-[3px]">广小二</span>
        <span className="ml-[37px] text-[#6b3a10]">为什么单</span>
        <span className="ml-[119px] text-[12.5px] font-['Liberation_Sans',sans-serif]">13907298339</span>
        <Caret c="ml-[7px]" />
        <span className="ml-[9px]">造价豆:96</span>
        <span className="ml-[7px]">{I.bell}</span>
        <More c="ml-[46px] -mt-[8px]" />
      </div>
      {/* Toolbar 1 */}
      <div className="h-[30px] bg-gradient-to-b from-[#f4f4f4] to-[#f9f9f9] flex items-center pl-[5px] whitespace-nowrap">
        <Tool w="w-[24px]" i={I.doc} />
        <div className="flex items-center w-[34px] shrink-0">{I.open}<Caret c="ml-[4px]" /></div>
        <Tool w="w-[22px]" i={I.save} />
        <Sep c="w-[7px]" />
        <div className="flex items-center w-[53px] shrink-0">{I.undo}<Caret c="ml-[5px]" /></div>
        <div className="w-[13px] shrink-0 -mt-[12px]"><More /></div>
        <Tool w="w-[52px]" i={I.def} t="定义" />
        <Tool w="w-[75px]" i={I.sigma} t="汇总计算" />
        <Tool w="w-[62px]" i={I.cloud} t="云检查" />
        <Tool w="w-[75px]" i={I.level} t="平齐板顶" g />
        <Tool w="w-[77px]" i={I.binoc} t="查找图元" />
        <Tool w="w-[86px]" i={I.view} t="查看钢筋量" />
        <Tool w="w-[72px]" i={I.batch} t="批量选择" g />
        <Tool w="w-[74px]" i={I.rebar3d} t="钢筋三维" box pl="pl-[2px]" />
        <div className="w-[31px] pl-[13px] shrink-0 -mt-[12px]"><More /></div>
        <Tool w="w-[63px]" i={I.cube} t="三维" a />
        <Tool w="w-[61px]" i={I.cubeO} t="俯视" a />
        <Tool w="w-[74px]" i={I.orbit} t="动态观察" box pl="pl-[3px]" />
        <div className="w-[4px] shrink-0" />
        <Tool w="w-[75px]" i={I.local} t="局部三维" g />
        <Sep c="w-[5px]" />
        <Tool w="w-[52px]" i={I.full} t="全屏" />
        <Tool w="w-[64px]" i={I.zoom} t="缩放" a />
        <Tool w="w-[62px]" i={I.hand} t="平移" a />
        <Tool w="w-[84px]" i={I.rot} t="屏幕旋转" a tight />
        <More c="ml-[50px] -mt-[12px]" />
      </div>
      {/* Body */}
      <div className="h-[612px] pt-px flex">
        {/* Left */}
        <div className="w-[183px] shrink-0 h-full flex flex-col">
          <div className="h-[15px] border border-[#a0a0a0] rounded-[1px] flex items-center bg-[#f4f4f4] text-[13px] shrink-0">
            <span>模块导航栏</span>
            <svg viewBox="0 0 9 11" className="w-[9px] h-[11px] ml-auto" fill="none" stroke="#111"><path d="M2 1h5M3 1v5M6 1v5M1 6h7M4.500 6v5" /></svg>
            <svg viewBox="0 0 9 9" className="w-[9px] h-[9px] ml-[11px] mr-[3px]" fill="none" stroke="#333"><path d="M1 1l7 7M8 1L1 8" /></svg>
          </div>
          <div className="h-[23px] mt-px mx-px border border-[#a8a8a8] bg-[#f0f0f0] flex items-center justify-center shrink-0">工程设置</div>
          <div className="h-[22px] mx-px border-x border-b border-[#a8a8a8] bg-[#f0f0f0] flex items-center justify-center shrink-0">绘图输入</div>
          <div className="h-[514px] mx-px border border-[#a0a0a0] bg-white flex flex-col overflow-hidden shrink-0">
            <div className="h-[24px] flex items-center pl-[5px] shrink-0">
              <svg viewBox="0 0 40 16" className="w-[40px] h-[16px]" fill="none" stroke="#1f4a4a" strokeWidth="2.200"><path d="M2 5h8M6 1v8M9 11h8M13 7v8M25 4h7M30 11h8" /></svg>
            </div>
            <div className="flex-1 relative flex overflow-hidden text-[#111] font-['Liberation_Serif','Noto_Sans_CJK_SC',serif]">
              <div className="flex-1 overflow-hidden relative pt-[4px]">
                <span className="absolute left-[13px] top-0 h-[83px] border-l border-dotted border-[#888]" />
                <span className="absolute left-[32px] top-0 h-[4px] border-l border-dotted border-[#888]" />
                <Leaf k="raft" t="筏板基础(M)" />
                <Leaf k="col" t="框柱(Z)" />
                <Leaf k="wall" t="剪力墙(Q)" />
                <Leaf k="beam" t="梁(L)" />
                <Leaf k="slab" t="现浇板(B)" />
                <Row t="轴线" />
                <Row t="柱" />
                <Row t="墙" />
                <Row t="门窗洞" />
                <Row t="梁" />
                <Row t="板" />
                <Row t="基础" arrow="open" />
                <div className="relative">
                  <span className="absolute left-[13px] top-0 bottom-0 border-l border-dotted border-[#888]" />
                  <Leaf k="fbeam" t="基础梁(F)" />
                  <Leaf k="raft" t="筏板基础(M)" />
                  <Leaf k="pit" t="集水坑(K)" />
                  <Leaf k="cap" t="柱墩(Y)" />
                  <Leaf k="main" t="筏板主筋(R)" />
                  <Leaf k="neg" t="筏板负筋(X)" />
                  <Leaf k="ind" t="独立基础(P)" />
                  <Leaf k="strip" t="条形基础(T)" />
                  <Leaf k="pcap" t="桩承台(V)" />
                  <Leaf k="fbeam" t="承台梁(F)" />
                  <Leaf k="pile" t="桩(U)" />
                  <Leaf k="band" t="基础板带(W)" />
                </div>
                <Row t="其它" />
                <Row t="自定义" arrow="open" />
                <div className="relative">
                  <span className="absolute left-[13px] top-0 bottom-0 border-l border-dotted border-[#888]" />
                  <Leaf k="pt" t="自定义点" />
                  <Leaf k="line" t="自定义线(X)" hl>
                    <BoxIcon />
                    <span className="ml-px bg-[#ffe97a] text-[9px] font-bold leading-[10px] font-['Liberation_Sans',sans-serif] -mt-[3px]">NE!</span>
                  </Leaf>
                  <Leaf k="face" t="自定义面" />
                  <Leaf k="dim" t="尺寸标注(W)" />
                  <svg viewBox="0 0 12 16" className="absolute left-[50px] top-[53px] w-[11px] h-[15px]"><path d="M1 1l10 9H6.500l2.500 5-2 1-2.500-5L1 13z" fill="#c4c4c4" stroke="#888" /></svg>
                </div>
                <div className="flex items-start h-[16px] ml-[93px] pt-px">
                  <BoxIcon />
                  <span className="ml-px bg-[#ffe97a] text-[9px] font-bold leading-[10px] font-['Liberation_Sans',sans-serif]">NEW</span>
                </div>
              </div>
              <div className="w-[17px] shrink-0 bg-[#f0f0f0] flex flex-col items-center">
                <svg viewBox="0 0 9 6" className="w-[9px] h-[6px] mt-[6px]" fill="none" stroke="#555" strokeWidth="1.300"><path d="M1 5l3.500-3.500L8 5" /></svg>
                <div className="w-full h-[409px] mt-[36px] bg-[#cdcdcd]" />
                <svg viewBox="0 0 9 6" className="w-[9px] h-[6px] mt-[19px]" fill="none" stroke="#555" strokeWidth="1.300"><path d="M1 1l3.500 3.500L8 1" /></svg>
              </div>
            </div>
          </div>
          <div className="h-[24px] mt-[1px] mx-px border border-[#a8a8a8] bg-[#f0f0f0] flex items-center justify-center shrink-0">单构件输入</div>
          <div className="h-[24px] mt-px mx-px border border-[#a8a8a8] bg-[#f0f0f0] flex items-center justify-center shrink-0">报表预览</div>
        </div>
        {/* Right */}
        <div className="ml-[5px] flex-1 min-w-0 flex flex-col whitespace-nowrap">
          <div className="h-[26px] flex items-center pl-[2px] shrink-0">
            <div className="flex items-center h-[24px] bg-[#f5f5f5]">
              <Grip />
              <Tool w="w-[51px]" i={I.del} t="删除" g /><Sep c="w-[5px]" />
              <Tool w="w-[52px]" i={I.copy} t="复制" g />
              <Tool w="w-[51px]" i={I.mirror} t="镜像" g /><Sep />
              <Tool w="w-[51px]" i={I.move} t="移动" g />
              <Tool w="w-[51px]" i={I.rotate} t="旋转" g /><Sep />
              <Tool w="w-[50px]" i={I.extend} t="延伸" g />
              <Tool w="w-[52px]" i={I.trim} t="修剪" g /><Sep />
              <Tool w="w-[49px]" i={I.brk} t="打断" g />
              <Tool w="w-[53px]" i={I.brk} t="合并" g />
              <Tool w="w-[51px]" i={I.split} t="分割" g /><Sep c="w-[5px]" />
              <Tool w="w-[60px]" i={I.align} t="对齐" g a tight />
              <Tool w="w-[51px]" i={I.offset} t="偏移" g />
              <Tool w="w-[51px]" i={I.stretch} t="拉伸" g /><Sep c="w-[7px]" />
              <Tool w="w-[71px]" i={I.grab} t="设置夹点" g />
            </div>
          </div>
          <div className="h-[28px] flex items-center pl-[2px] shrink-0">
            <div className="flex items-center h-[27px] bg-[#f7f7f7]">
              <Grip />
              <div className="w-[56px] h-full flex items-center justify-between bg-white pr-[4px] shrink-0">首层<Caret c="" /></div>
              <div className="w-[72px] h-full flex items-center justify-between bg-white pl-[4px] pr-[4px] shrink-0">自定义<Caret c="" /></div>
              <div className="w-[72px] h-full flex items-center justify-between bg-white pl-[4px] pr-[4px] shrink-0">自定义线<Caret c="" /></div>
              <div className="w-[72px] h-full flex items-center justify-between bg-white pl-[4px] pr-[4px] shrink-0">ZDYX-10<Caret c="" /></div>
              <Sep c="w-[11px] pl-[4px]" />
              <Tool w="w-[47px]" i={I.prop} t="属性" />
              <Tool w="w-[74px]" i={I.edit} t="编辑钢筋" box pl="pl-[2px]" />
              <div className="w-[4px] shrink-0" />
              <Tool w="w-[76px]" i={I.list} t="构件列表" />
              <Tool w="w-[74px]" i={I.pick} t="拾取构件" />
            </div>
            <div className="flex items-center h-[27px] bg-[#f7f7f7] ml-[73px]">
              <Grip c="w-[8px] pl-[2px]" />
              <Tool w="w-[51px]" i={I.two} t="两点" />
              <Tool w="w-[52px]" i={I.para} t="平行" />
              <Tool w="w-[62px]" i={I.angle} t="点角" a />
              <Tool w="w-[87px]" i={I.three} t="三点辅轴" a />
              <Tool w="w-[75px]" i={I.delaux} t="删除辅轴" />
              <Tool w="w-[85px]" i={I.dim} t="尺寸标注" a />
            </div>
          </div>
          <div className="h-[30px] flex items-center pl-[2px] shrink-0">
            <div className="flex items-center h-[28px] bg-[#f5f5f5]">
              <Grip />
              <Tool w="w-[58px]" i={I.sel} t="选择" a />
              <Sep c="w-[11px] pl-[5px]" />
              <Tool w="w-[51px]" i={I.lineT} t="直线" />
              <Tool w="w-[75px]" i={I.addL} t="点加长度" />
              <Tool w="w-[84px]" i={I.arc} t="三点画弧" a />
              <div className="w-[55px] h-full bg-white flex items-center justify-end pr-[4px] shrink-0"><Caret c="" /></div>
              <div className="w-[6px] shrink-0" />
              <Tool w="w-[51px]" i={I.rect} t="矩形" /><Sep c="w-[5px]" />
              <Tool w="w-[82px]" i={I.smart} t="智能布置" a tight />
              <Grip c="w-[33px] pl-[6px]" />
            </div>
          </div>
          {/* Canvas */}
          <div className="relative h-[305px] shrink-0">
            <Scene />
            <div className="absolute left-[9px] top-[3px] w-[167px] h-[177px] bg-white border-2 border-[#a4a4a4] flex flex-col">
              <div className="h-[29px] flex items-start pt-[7px] pl-[7px] text-[#a8a8a8] shrink-0">钢筋显示控制面板</div>
              <div className="flex-1 border border-[#8c8c8c] pt-px pl-[3px] text-[#111]">
                {["水平纵筋", "横向钢筋", "显示其它图元", "显示详细公式"].map((t) => (
                  <div key={t} className="flex items-center h-[12px]">
                    <svg viewBox="0 0 11 11" className="w-[11px] h-[11px] shrink-0" fill="#fff" stroke="#777"><rect x=".5" y=".5" width="10" height="10" /><path d="M2.500 5.500l2 2 4-5" fill="none" stroke="#444" /></svg>
                    <span className="ml-[4px]">{t}</span>
                  </div>
                ))}
              </div>
            </div>
          </div>
          {/* Snap bar */}
          <div className="h-[30px] flex items-center pl-[212px] shrink-0 text-[12px]">
            <div className="flex items-center h-[28px] bg-[#f7f7f7] pr-[10px]">
              <Grip c="w-[10px] pl-[2px]" />
              <Tool w="w-[49px]" i={I.cross} t="交点" />
              <Tool w="w-[50px]" i={I.perp} t="垂点" box pl="pl-[5px]" />
              <Tool w="w-[50px]" i={I.mid} t="中点" box pl="pl-[3px]" />
              <div className="w-[4px] shrink-0" />
              <Tool w="w-[51px]" i={I.top} t="顶点" />
              <Tool w="w-[50px]" i={I.coord} t="坐标" />
              <Grip c="w-[9px] pl-[3px]" />
              <div className="w-[60px] h-full bg-white flex items-center justify-between pr-[5px] shrink-0">不偏移<Caret c="" /></div>
              <Sep c="w-[5px] pl-[4px]" />
              <span className="w-[19px] shrink-0 text-[#666] font-['Liberation_Sans',sans-serif]">X=</span>
              <Spin v="0" w="w-[56px]" />
              <span className="w-[30px] pl-[3px] shrink-0 text-[#666] font-['Liberation_Sans',sans-serif]">mm</span>
              <span className="w-[19px] shrink-0 text-[#666] font-['Liberation_Sans',sans-serif]">Y=</span>
              <Spin v="0" w="w-[56px]" />
              <span className="w-[25px] pl-[3px] shrink-0 text-[#666] font-['Liberation_Sans',sans-serif]">mm</span>
              <Sep c="w-[7px]" />
              <span className="w-[11px] h-[11px] border border-[#888] bg-white shrink-0" />
              <span className="ml-[9px] w-[29px] shrink-0">旋转</span>
              <Spin v="0.000" w="w-[66px]" />
              <span className="ml-[4px] text-[#666]">°</span>
            </div>
          </div>
          <div className="h-[3px] shrink-0" />
          {/* Grid toolbar */}
          <div className="h-[27px] flex shrink-0">
            <div className="w-[16px] shrink-0 pl-[2px] pt-[2px]">
              <svg viewBox="0 0 11 11" className="w-[11px] h-[11px]" fill="#e8e8e8" stroke="#666"><rect x=".5" y=".5" width="10" height="10" /><path d="M2 2l7 7M9 2L2 9" fill="none" stroke="#666" /></svg>
            </div>
            <div className="flex items-center flex-1 bg-[#f6f6f6] pl-[2px]">
              <svg viewBox="0 0 10 11" className="w-[10px] h-[11px] ml-[2px] shrink-0"><path d="M0 0h2v11H0zM10 0v11L3 5.500z" fill="#c4c4c4" /></svg>
              <svg viewBox="0 0 8 11" className="w-[8px] h-[11px] ml-[16px] shrink-0"><path d="M8 0v11L0 5.500z" fill="#c4c4c4" /></svg>
              <svg viewBox="0 0 8 11" className="w-[8px] h-[11px] ml-[15px] shrink-0"><path d="M0 0v11l8-5.500z" fill="#2f6fd0" /></svg>
              <svg viewBox="0 0 10 11" className="w-[10px] h-[11px] ml-[15px] shrink-0"><path d="M8 0h2v11H8zM0 0v11l7-5.500z" fill="#2f6fd0" /></svg>
              <Sep c="w-[15px] pl-[8px]" />
              <svg viewBox="0 0 11 11" className="w-[11px] h-[11px] ml-[4px] shrink-0"><path d="M5.500 0L11 6H8v5H3V6H0z" fill="#c4c4c4" /></svg>
              <svg viewBox="0 0 11 11" className="w-[11px] h-[11px] ml-[12px] shrink-0"><path d="M5.500 11L11 5H8V0H3v5H0z" fill="#3a78d8" /></svg>
              <Sep c="w-[12px] pl-[11px]" />
              <Tool w="w-[52px]" i={I.ins} t="插入" g />
              <Tool w="w-[50px]" i={I.dela} t="删除" g />
              <Tool w="w-[75px]" i={I.scale} t="缩尺配筋" g />
              <Tool w="w-[74px]" i={I.info} t="钢筋信息" />
              <Tool w="w-[75px]" i={I.lib} t="钢筋图库" />
              <Tool w="w-[62px]" i={I.oth} t="其他" a tight />
              <span className="w-[32px] shrink-0">关闭</span>
              <Sep c="w-[7px]" />
              <span className="font-['Liberation_Sans','Noto_Sans_CJK_SC',sans-serif] text-[12.200px]">单构件钢筋总重(kg)：265.89</span>
            </div>
          </div>
          {/* Table */}
          <div className="flex flex-1 min-h-0">
            <div className="w-[13px] shrink-0 [background-image:radial-gradient(#bdbdbd_1px,transparent_1px)] [background-size:3px_3px]" />
            <Table />
          </div>
        </div>
      </div>
      <Widget />
    </div>
  );
}
